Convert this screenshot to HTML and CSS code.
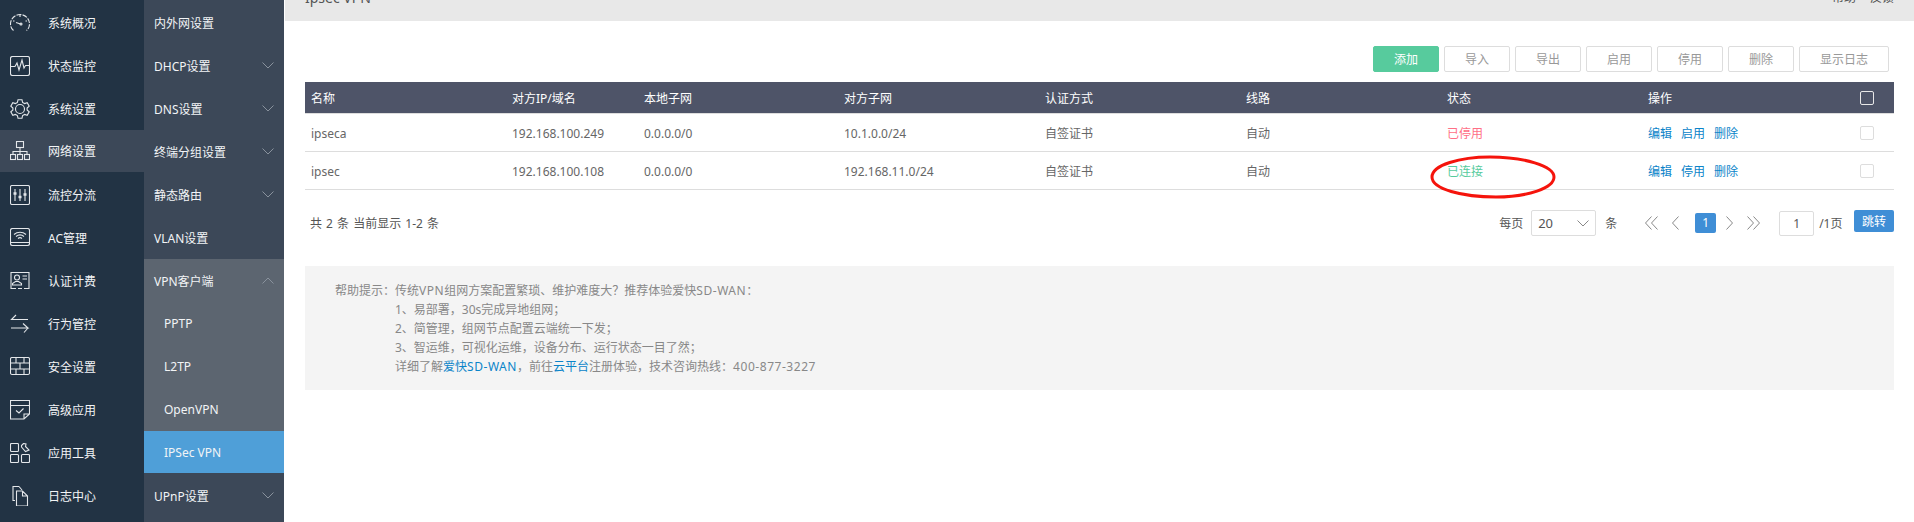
FILE: index.html
```html
<!DOCTYPE html>
<html lang="zh-CN">
<head>
    <meta charset="UTF-8">
    <meta name="viewport" content="width=device-width, initial-scale=1.0">
    <title>IPsec VPN</title>
    <link rel="stylesheet" href="styles.css">
</head>
<body>

    <div class="app">
        <!-- Main menu -->
        <nav class="nav-main">
            <a class="nav-item">
                <svg class="nav-icon" viewBox="0 0 20 20"><path d="M3.500 17.500C1.500 16 .5 13.500 .5 11A9.500 9.500 0 0 1 19.500 11C19.500 13.500 18.500 16 16.500 17.500" stroke-dasharray="5 1.200"/><path d="M6 9.500L10.500 11"/><circle cx="11" cy="11" r="1"/><path d="M10 2V4M3 8H4.500M17 8H15.500"/></svg>
                <span>系统概况</span>
            </a>
            <a class="nav-item">
                <svg class="nav-icon" viewBox="0 0 20 20"><rect x="0.500" y="0.500" width="19" height="19" rx="2"/><path d="M1 10.500H5L7 7L9 14L12 4L14 12L15.500 9.500H19"/></svg>
                <span>状态监控</span>
            </a>
            <a class="nav-item">
                <svg class="nav-icon" viewBox="0 0 20 20"><path d="M8 .8H12L12.600 3.500L14.600 4.600L17.200 3.700L19.200 7.100L17.100 9V11L19.200 12.900L17.200 16.300L14.600 15.400L12.600 16.500L12 19.200H8L7.400 16.500L5.400 15.400L2.800 16.300L.8 12.900L2.900 11V9L.8 7.100L2.800 3.700L5.400 4.600L7.400 3.500Z"/><circle cx="10" cy="10" r="4.500"/></svg>
                <span>系统设置</span>
            </a>
            <a class="nav-item nav-item-open">
                <svg class="nav-icon" viewBox="0 0 20 20"><rect x="6.500" y="0.500" width="7" height="6"/><rect x="0.500" y="13.500" width="5" height="5"/><rect x="7.500" y="13.500" width="5" height="5"/><rect x="14.500" y="13.500" width="5" height="5"/><path d="M10 6.500V13.500M3 13.500V10.500H17V13.500"/></svg>
                <span>网络设置</span>
            </a>
            <a class="nav-item">
                <svg class="nav-icon" viewBox="0 0 20 20"><rect x="0.500" y="0.500" width="19" height="19" rx="1.500"/><path d="M5 4V16M10 4V16M15 4V16"/><path class="thick" d="M3.500 8.500H6.500M8.500 12H11.500M13.500 9.500H16.500"/></svg>
                <span>流控分流</span>
            </a>
            <a class="nav-item">
                <svg class="nav-icon" viewBox="0 0 20 20"><rect x="0.500" y="0.500" width="19" height="17" rx="2"/><path d="M1 14.500H19M4 6.500C7.500 3.500 12.500 3.500 16 6.500M6 8.500C8.500 6.500 11.500 6.500 14 8.500M8 10.500C9.200 9.500 10.800 9.500 12 10.500"/></svg>
                <span>AC管理</span>
            </a>
            <a class="nav-item">
                <svg class="nav-icon" viewBox="0 0 20 20"><path d="M6 17.500H1V1.500H19V17.500H14M8 17.500H12"/><circle cx="7" cy="6.500" r="2.500"/><path d="M2.500 14V12.500L5.500 10.500H8.500L11.500 12.500V14ZM12.500 5H17M12.500 8H17"/></svg>
                <span>认证计费</span>
            </a>
            <a class="nav-item">
                <svg class="nav-icon" viewBox="0 0 20 20"><path d="M18 5.500H1.500L6 1M1 14H18L13 9.500M18 14L14 18.500"/></svg>
                <span>行为管控</span>
            </a>
            <a class="nav-item">
                <svg class="nav-icon" viewBox="0 0 20 20"><rect x="0.500" y="0.500" width="19" height="17" rx="1.500"/><path d="M1 6H19M1 12H19M6 1V6M14 1V6M10 6V12M6 12V17M14 12V17"/></svg>
                <span>安全设置</span>
            </a>
            <a class="nav-item">
                <svg class="nav-icon" viewBox="0 0 20 20"><path d="M14 19H.5V.5H19.500V14ZM14 19V14H19.500M1 5.500H19"/><path d="M6 10.500L9 13L13.500 8.500"/></svg>
                <span>高级应用</span>
            </a>
            <a class="nav-item">
                <svg class="nav-icon" viewBox="0 0 20 20"><rect x="0.500" y="0.500" width="8" height="8" rx="1"/><rect x="0.500" y="11.500" width="8" height="8" rx="1"/><rect x="11.500" y="11.500" width="8" height="8" rx="1"/><path d="M11.500 4L15.500 8.500L19 7L15.500 3.500L16 1L13.500 .5L11.500 2.500Z"/></svg>
                <span>应用工具</span>
            </a>
            <a class="nav-item">
                <svg class="nav-icon" viewBox="0 0 20 20"><path d="M9 .5H3V14.500H5M9 .5L12 4M6.500 5H12.500L17.500 10V20H6.500ZM12.500 5V10H17.500"/></svg>
                <span>日志中心</span>
            </a>
        </nav>

        <!-- Sub menu -->
        <nav class="nav-sub">
            <a class="sub-item"><span>内外网设置</span></a>
            <a class="sub-item"><span>DHCP设置</span><svg class="chevron" viewBox="0 0 12 7"><path d="M.5 .5L6 6L11.500 .5"/></svg></a>
            <a class="sub-item"><span>DNS设置</span><svg class="chevron" viewBox="0 0 12 7"><path d="M.5 .5L6 6L11.500 .5"/></svg></a>
            <a class="sub-item"><span>终端分组设置</span><svg class="chevron" viewBox="0 0 12 7"><path d="M.5 .5L6 6L11.500 .5"/></svg></a>
            <a class="sub-item"><span>静态路由</span><svg class="chevron" viewBox="0 0 12 7"><path d="M.5 .5L6 6L11.500 .5"/></svg></a>
            <a class="sub-item"><span>VLAN设置</span></a>
            <div class="sub-group">
                <a class="sub-item"><span>VPN客户端</span><svg class="chevron" viewBox="0 0 12 7"><path d="M.5 6.500L6 1L11.500 6.500"/></svg></a>
                <a class="sub-item sub-child"><span>PPTP</span></a>
                <a class="sub-item sub-child"><span>L2TP</span></a>
                <a class="sub-item sub-child"><span>OpenVPN</span></a>
                <a class="sub-item sub-child sub-active"><span>IPSec VPN</span></a>
            </div>
            <a class="sub-item"><span>UPnP设置</span><svg class="chevron" viewBox="0 0 12 7"><path d="M.5 .5L6 6L11.500 .5"/></svg></a>
        </nav>

        <main class="content">
            <header class="page-header">
                <span class="page-title">Ipsec VPN</span>
                <span class="page-links"><a>帮助</a><a>反馈</a></span>
            </header>

            <div class="toolbar">
                <button class="btn btn-add">添加</button>
                <button class="btn">导入</button>
                <button class="btn">导出</button>
                <button class="btn">启用</button>
                <button class="btn">停用</button>
                <button class="btn">删除</button>
                <button class="btn btn-wide">显示日志</button>
            </div>

            <table class="vpn-table">
                <colgroup>
                    <col class="col-wide"><col class="col-ip"><col class="col-local"><col class="col-wide"><col class="col-wide"><col class="col-wide"><col class="col-wide"><col class="col-ops"><col>
                </colgroup>
                <thead>
                    <tr>
                        <th>名称</th>
                        <th>对方IP/域名</th>
                        <th>本地子网</th>
                        <th>对方子网</th>
                        <th>认证方式</th>
                        <th>线路</th>
                        <th>状态</th>
                        <th>操作</th>
                        <th><span class="check check-head"></span></th>
                    </tr>
                </thead>
                <tbody>
                    <tr>
                        <td>ipseca</td>
                        <td>192.168.100.249</td>
                        <td>0.0.0.0/0</td>
                        <td>10.1.0.0/24</td>
                        <td>自签证书</td>
                        <td>自动</td>
                        <td class="status-off">已停用</td>
                        <td class="ops"><a>编辑</a><a>启用</a><a>删除</a></td>
                        <td><span class="check"></span></td>
                    </tr>
                    <tr>
                        <td>ipsec</td>
                        <td>192.168.100.108</td>
                        <td>0.0.0.0/0</td>
                        <td>192.168.11.0/24</td>
                        <td>自签证书</td>
                        <td>自动</td>
                        <td class="status-on">已连接</td>
                        <td class="ops"><a>编辑</a><a>停用</a><a>删除</a></td>
                        <td><span class="check"></span></td>
                    </tr>
                </tbody>
            </table>

            <div class="pager">
                <span class="pager-total">共 2 条 当前显示 1-2 条</span>
                <span>每页</span>
                <div class="page-size">
                    <span>20</span>
                    <svg class="size-arrow" viewBox="0 0 12 7"><path d="M.5 .5L6 6L11.500 .5"/></svg>
                </div>
                <span class="page-unit">条</span>
                <div class="page-nav">
                    <svg class="page-arrow page-arrow-wide" viewBox="0 0 13 14"><path d="M6.500 .5L.5 7L6.500 13.500M12.500 .5L6.500 7L12.500 13.500"/></svg>
                    <svg class="page-arrow" viewBox="0 0 7 14"><path d="M6.500 .5L.5 7L6.500 13.500"/></svg>
                    <span class="page-current">1</span>
                    <svg class="page-arrow" viewBox="0 0 7 14"><path d="M.5 .5L6.500 7L.5 13.500"/></svg>
                    <svg class="page-arrow page-arrow-wide" viewBox="0 0 13 14"><path d="M.5 .5L6.500 7L.5 13.500M6.500 .5L12.500 7L6.500 13.500"/></svg>
                </div>
                <span class="page-input">1</span>
                <span class="page-count">/1页</span>
                <button class="btn-jump">跳转</button>
            </div>

            <section class="help">
                <span class="help-label">帮助提示：</span>
                <div>
                    <p>传统<span class="latin">VPN</span>组网方案配置繁琐、维护难度大？推荐体验爱快<span class="latin">SD-WAN</span>：</p>
                    <p>1、易部署，30s完成异地组网；</p>
                    <p>2、简管理，组网节点配置云端统一下发；</p>
                    <p>3、智运维，可视化运维，设备分布、运行状态一目了然；</p>
                    <p>详细了解<a>爱快<span class="latin">SD-WAN</span></a>，前往<a>云平台</a>注册体验，技术咨询热线：<span class="latin">400-877-3227</span></p>
                </div>
            </section>

            <!-- Hand drawn mark over the status cell -->
            <svg class="mark" viewBox="0 0 126 44"><path d="M2 22C2 10 30 2 60 2C94 2 124 11 124 22C124 33 98 42 66 42C32 42 2 34 2 22Z"/></svg>
        </main>
    </div>

</body>
</html>
```

FILE: styles.css
```css
/* Base */
* {
    box-sizing: border-box;
}

body {
    font-family: "Noto Sans", "Noto Sans CJK SC", sans-serif;
    font-size: 12px;
    margin: 0;
    padding: 0;
    color: #666;
    background-color: #fff;
}

p {
    margin: 0;
}

.app {
    display: flex;
    height: 100vh;
    overflow: hidden;
}

/* Main menu */
.nav-main {
    width: 144px;
    flex-shrink: 0;
    padding-top: 1px;
    background-color: #223344;
    color: #f2f4f6;
}

.nav-item {
    display: flex;
    align-items: center;
    height: 43px;
    padding-left: 10px;
}

.nav-item-open {
    height: 42px;
    margin-bottom: 1px;
    background-color: #3c4858;
}

.nav-icon {
    width: 20px;
    height: 20px;
    margin-right: 18px;
    fill: none;
    stroke: #e4e7ea;
    stroke-width: 1.100;
}

.nav-icon .thick {
    stroke-width: 2.500;
}

/* Sub menu */
.nav-sub {
    width: 140px;
    flex-shrink: 0;
    margin-right: 1px;
    padding-top: 1px;
    background-color: #3c4858;
    color: #f2f4f6;
}

.sub-item {
    display: flex;
    align-items: center;
    justify-content: space-between;
    height: 43px;
    padding: 0 10px;
}

.sub-group {
    background-color: #5c6570;
}

.sub-child {
    padding-left: 20px;
}

.sub-active {
    height: 42px;
    margin-bottom: 1px;
    background-color: #4f9fd8;
}

.chevron {
    width: 12px;
    height: 7px;
    fill: none;
    stroke: #89929d;
    stroke-width: 1;
}

/* Content */
.content {
    flex: 1;
    position: relative;
    min-width: 0;
}

.page-header {
    display: flex;
    justify-content: space-between;
    height: 21px;
    padding: 0 20px;
    overflow: hidden;
    background-color: #e8e8e8;
    color: #555;
}

.page-title {
    margin-top: -12px;
    font-size: 14px;
    line-height: 20px;
}

.page-links {
    margin-top: -12px;
    line-height: 20px;
}

.page-links a {
    margin-left: 14px;
}

.toolbar {
    display: flex;
    justify-content: flex-end;
    gap: 5px;
    margin: 25px 20px 10px 0;
    padding-right: 5px;
}

.btn {
    width: 66px;
    height: 26px;
    padding: 0;
    border: 1px solid #ddd;
    border-radius: 2px;
    background-color: #fff;
    color: #999;
    font-family: inherit;
    font-size: 12px;
}

.btn-add {
    border-color: #57cb9d;
    background-color: #57cb9d;
    color: #fff;
}

.btn-wide {
    width: 90px;
}

/* Table */
.vpn-table {
    width: 1589px;
    margin-left: 20px;
    border-collapse: separate;
    border-spacing: 0;
    table-layout: fixed;
}

.col-wide {
    width: 201px;
}

.col-ip {
    width: 132px;
}

.col-local {
    width: 200px;
}

.col-ops {
    width: 212px;
}

.vpn-table th {
    height: 32px;
    padding: 1px 6px 0;
    border-bottom: 1px solid #ddd;
    background-color: #4e5468;
    color: #fff;
    font-weight: normal;
    text-align: left;
}

.vpn-table td {
    height: 38px;
    padding: 1px 6px 0;
    border-bottom: 1px solid #ddd;
}

.check {
    display: block;
    width: 14px;
    height: 14px;
    margin-top: -1px;
    border: 1px solid #ddd;
    border-radius: 2px;
    background-color: #fff;
}

.check-head {
    border-color: #e8e8e8;
    background-color: transparent;
}

.status-off {
    color: #ff6f85;
}

.status-on {
    color: #57cb9d;
}

.ops a {
    margin-right: 9px;
    color: #0b84c9;
}

/* Pagination */
.pager {
    display: flex;
    align-items: center;
    height: 26px;
    margin: 20px 20px 30px 25px;
    color: #555;
}

.pager-total {
    margin-right: auto;
    word-spacing: 1px;
}

.page-size {
    display: flex;
    align-items: center;
    justify-content: space-between;
    width: 65px;
    height: 26px;
    margin-left: 8px;
    padding: 0 6px;
    border: 1px solid #ddd;
    border-radius: 2px;
    font-size: 13px;
}

.size-arrow {
    width: 12px;
    height: 7px;
    fill: none;
    stroke: #888;
}

.page-unit {
    margin-left: 9px;
}

.page-nav {
    display: flex;
    align-items: center;
    gap: 14px;
    margin: 0 19px 0 28px;
}

.page-arrow {
    width: 7px;
    height: 14px;
    fill: none;
    stroke: #888;
}

.page-arrow-wide {
    width: 13px;
}

.page-current {
    width: 21px;
    height: 20px;
    margin: 0 -4px 0 2px;
    border-radius: 2px;
    background-color: #3f8ed6;
    color: #fff;
    line-height: 20px;
    text-align: center;
}

.page-input {
    width: 35px;
    height: 25px;
    border: 1px solid #ddd;
    border-radius: 2px;
    line-height: 23px;
    text-align: center;
}

.page-count {
    margin: 0 11.500px 0 5px;
}

.btn-jump {
    align-self: flex-start;
    width: 40px;
    height: 22px;
    padding: 0;
    border: 0;
    border-radius: 2px;
    background-color: #3f8ed6;
    color: #fff;
    font-family: inherit;
    font-size: 12px;
}

/* Help box */
.help {
    display: flex;
    width: 1589px;
    margin-left: 20px;
    padding: 14.500px 30px;
    background-color: #f4f4f4;
    color: #888;
    line-height: 19px;
}

.help-label {
    width: 60px;
    flex-shrink: 0;
    white-space: nowrap;
}

.help a {
    color: #0b84c9;
}

.help .latin {
    letter-spacing: .55px;
}

/* Red ellipse drawn over the status cell */
.mark {
    position: absolute;
    left: 1145px;
    top: 155px;
    width: 126px;
    height: 44px;
    fill: none;
    stroke: #f5140c;
    stroke-width: 3;
}
```
